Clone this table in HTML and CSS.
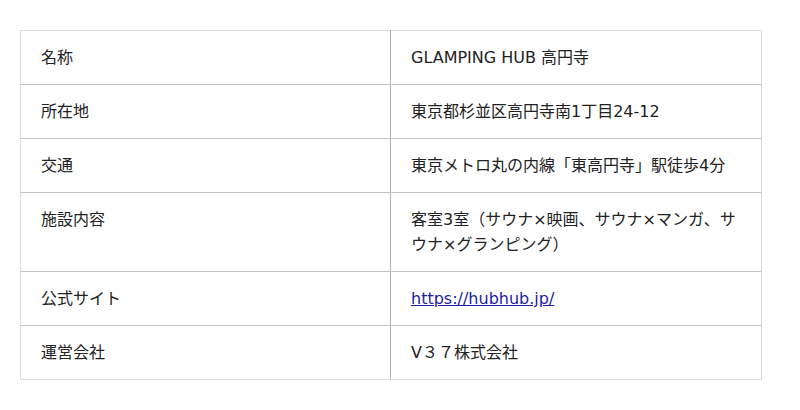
FILE: index.html
```html
<!DOCTYPE html>
<html lang="ja">
<head>
<meta charset="utf-8">
<link rel="stylesheet" href="styles.css">
</head>
<body>
<table class="info">
  <tbody>
    <tr><th>名称</th><td>GLAMPING HUB 高円寺</td></tr>
    <tr><th>所在地</th><td>東京都杉並区高円寺南1丁目24-12</td></tr>
    <tr><th>交通</th><td>東京メトロ丸の内線「東高円寺」駅徒歩4分</td></tr>
    <tr><th>施設内容</th><td>客室3室（サウナ×映画、サウナ×マンガ、サウナ×グランピング）</td></tr>
    <tr><th>公式サイト</th><td><a href="#" class="link">https://hubhub.jp/</a></td></tr>
    <tr><th>運営会社</th><td>V３７株式会社</td></tr>
  </tbody>
</table>
</body>
</html>
```
FILE: styles.css
```css
html, body {
  margin: 0;
  padding: 0;
  background: #fff;
}
body {
  padding: 30px 39px 0 20px;
  font-family: "DejaVu Sans", "Noto Sans CJK JP", sans-serif;
  font-size: 16px;
  color: #222;
}
.info {
  width: 742px;
  border-collapse: collapse;
  border: 1px solid #dcdcdc;
  table-layout: fixed;
}
.info th, .info td {
  text-align: left;
  vertical-align: top;
  font-weight: normal;
  line-height: 25px;
  padding: 14px 20px 14px 20px;
  border-bottom: 1px solid #c4c4c4;
}
.info tr:last-child th, .info tr:last-child td {
  border-bottom: 1px solid #dcdcdc;
}
.info th {
  width: 329px;
  border-right: 1px solid #b0b0b0;
}
.link {
  color: #1c1ca8;
}
```
